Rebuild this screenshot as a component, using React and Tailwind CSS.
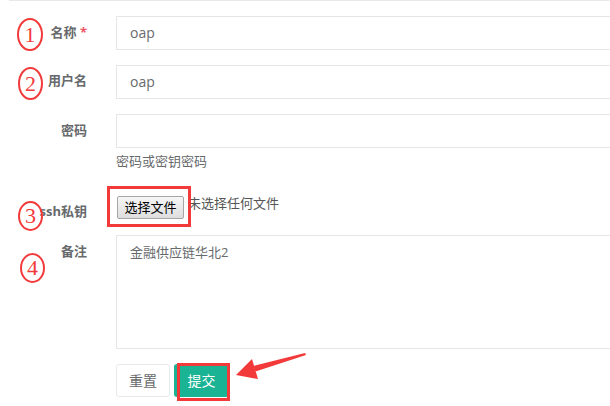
import React from "react";

const FONT = { fontFamily: '"Open Sans", "Noto Sans CJK SC", sans-serif' };

function Label({ children, className = "" }) {
  return (
    <div className={`w-[87px] shrink-0 text-right text-[13px] font-bold text-[#676a6c] ${className}`}>
      {children}
    </div>
  );
}

function Mark({ n, className }) {
  return (
    <div className={`absolute flex items-center justify-center rounded-[50%] border-[2.5px] border-[#f23a3a] text-[#f23a3a] text-[22px] leading-none ${className}`}
      style={{ fontFamily: '"Liberation Serif", serif' }}>
      {n}
    </div>
  );
}

export default function App() {
  return (
    <div className="relative w-[610px] h-[406px] overflow-hidden bg-white" style={FONT}>
      <div className="ml-[9px] h-px bg-[#e7eaec]" />

      <div className="flex flex-col pt-[15px]">
        {/* 名称 */}
        <div className="flex gap-[29px]">
          <Label className="h-[34px] leading-[32px]">名称 <span className="text-[#ed5565]">*</span></Label>
          <div className="w-[540px] shrink-0 h-[34px] border border-[#e5e6e7] px-[13px] text-[14px] leading-[32px] text-[#676a6c]">oap</div>
        </div>

        {/* 用户名 */}
        <div className="flex gap-[29px] mt-[15px]">
          <Label className="h-[34px] leading-[30px]">用户名</Label>
          <div className="w-[540px] shrink-0 h-[34px] border border-[#e5e6e7] px-[13px] text-[14px] leading-[32px] text-[#676a6c]">oap</div>
        </div>

        {/* 密码 */}
        <div className="flex gap-[29px] mt-[15px]">
          <Label className="h-[34px] leading-[32px]">密码</Label>
          <div className="flex flex-col">
            <div className="w-[540px] h-[34px] border border-[#e5e6e7]" />
            <div className="mt-[4px] text-[13px] leading-[18px] text-[#676a6c]">密码或密钥密码</div>
          </div>
        </div>

        {/* ssh私钥 */}
        <div className="flex gap-[29px] mt-[25px]">
          <Label className="h-[24px] leading-[32px]">ssh私钥</Label>
          <div className="flex items-center h-[24px]">
            <button className="ml-px h-[23px] w-[67px] border border-[#a6a6a6] rounded-[2px] bg-gradient-to-b from-[#f6f6f6] to-[#dedede] text-[13px] text-black leading-none">选择文件</button>
            <span className="ml-[4px] -mt-[6px] text-[13px] text-[#555]">未选择任何文件</span>
          </div>
        </div>

        {/* 备注 */}
        <div className="flex gap-[29px] mt-[16px]">
          <Label className="pt-[7px] leading-[18px]">备注</Label>
          <div className="w-[540px] shrink-0 h-[114px] border border-[#e5e6e7] px-[13px] pt-[7px] text-[13px] leading-[18px] text-[#676a6c]">金融供应链华北2</div>
        </div>

        {/* 按钮 */}
        <div className="flex gap-[4px] mt-[15px] ml-[116px]">
          <button className="w-[54px] h-[33px] border border-[#e7eaec] rounded-[3px] bg-white text-[14px] text-[#676a6c]">重置</button>
          <button className="w-[55px] h-[33px] rounded-[3px] bg-[#1ab394] text-[14px] text-white">提交</button>
        </div>
      </div>

      {/* annotations */}
      <div className="absolute left-[107px] top-[186px] w-[84px] h-[41px] border-[3px] border-[#f23a3a]" />
      <div className="absolute left-[177px] top-[363px] w-[53px] h-[38px] border-[3px] border-[#f23a3a]" />

      <Mark n="1" className="left-[17px] top-[18px] w-[26px] h-[33px]" />
      <Mark n="2" className="left-[18px] top-[67px] w-[25px] h-[33px]" />
      <Mark n="3" className="left-[18px] top-[201px] w-[25px] h-[30px]" />
      <Mark n="4" className="left-[20px] top-[253px] w-[25px] h-[30px]" />

      <svg className="absolute left-0 top-0" width="610" height="406">
        <polygon points="305,353 306,355 255.5,371.5 253.5,366" fill="#f23a3a" />
        <polygon points="236,375 252,359 258,379" fill="#f23a3a" />
      </svg>
    </div>
  );
}
